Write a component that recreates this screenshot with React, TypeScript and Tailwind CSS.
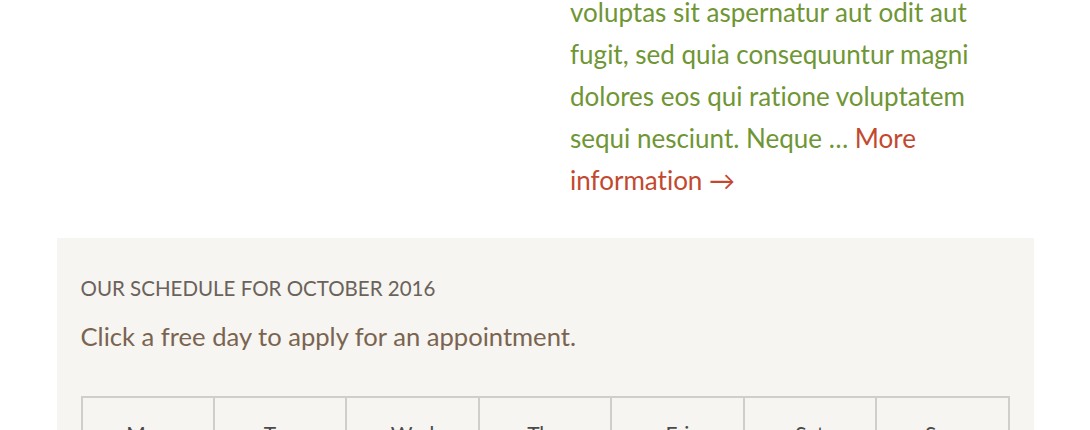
const days = ["Mon", "Tue", "Wed", "Thu", "Fri", "Sat", "Sun"];

const weeks: (number | null)[][] = [
  [null, null, null, null, null, 1, 2],
  [3, 4, 5, 6, 7, 8, 9],
  [10, 11, 12, 13, 14, 15, 16],
];

export default function App() {
  return (
    <div className="min-h-screen bg-white font-['Lato','Noto_Sans',sans-serif] [font-variant-ligatures:none]">
      <div className="mx-auto w-[977px]">
        <section className="-mt-[9px] grid grid-cols-2 gap-[50px] px-[24px]">
          <div />
          <p className="text-[26px] leading-[42px] text-[#6f9634]">
            voluptas sit aspernatur aut odit aut fugit, sed quia consequuntur magni dolores eos qui
            ratione voluptatem sequi nesciunt. Neque …{" "}
            <a href="#" className="text-[#c2492f]">
              More information →
            </a>
          </p>
        </section>

        <section className="mt-[37px] bg-[#f6f5f1] px-[24px] pt-[35px] pb-10">
          <h2 className="text-[20.5px] leading-[30px] uppercase text-[#6b625b]">
            Our schedule for October 2016
          </h2>
          <p className="mt-[12px] text-[25.6px] leading-[42px] text-[#7a6450]">
            Click a free day to apply for an appointment.
          </p>
          <table className="mt-[39px] w-full table-fixed border-collapse border-2 border-[#d0cecb]">
            <thead>
              <tr>
                {days.map((d) => (
                  <th
                    key={d}
                    className="border-2 border-[#d0cecb] pt-[21px] pb-[12px] text-center text-[21px] leading-[30px] font-normal text-[#4a4a4a]"
                  >
                    {d}
                  </th>
                ))}
              </tr>
            </thead>
            <tbody>
              {weeks.map((w, i) => (
                <tr key={i}>
                  {w.map((n, j) => (
                    <td
                      key={j}
                      className="h-[60px] border-2 border-[#d0cecb] text-center text-[20px] text-[#6f9634]"
                    >
                      {n ?? ""}
                    </td>
                  ))}
                </tr>
              ))}
            </tbody>
          </table>
        </section>
      </div>
    </div>
  );
}
